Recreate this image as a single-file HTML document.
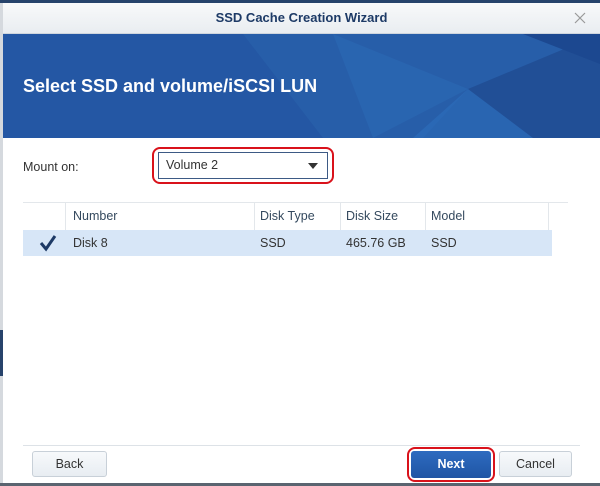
<!DOCTYPE html>
<html><head><style>
body{margin:0;width:600px;height:486px;overflow:hidden;background:#d5d9de;font-family:"Liberation Sans",sans-serif;position:relative}
.win{position:absolute;left:3px;top:3px;width:597px;height:480px;background:#fff;overflow:hidden}
.title{height:30px;background:linear-gradient(#f8f9fa,#e9edf1);text-align:center;line-height:30px;font-weight:bold;font-size:13px;color:#1d3a66;border-bottom:1px solid #cfd6de}
.banner{height:104px;background:#2457a4;position:relative;overflow:hidden}
.banner h1{position:absolute;left:20px;top:42px;margin:0;color:#fff;font-size:18px;font-weight:bold}
.t{position:absolute;font-size:12.5px;color:#333}
</style></head><body>
<div style="position:absolute;left:0;top:0;width:600px;height:3px;background:#27436b"></div>
<div style="position:absolute;left:0;top:330px;width:3px;height:46px;background:#27436b"></div>
<div style="position:absolute;left:0;top:483px;width:600px;height:3px;background:#5a6470"></div>
<div class="win">
<div class="title">SSD Cache Creation Wizard<svg style="position:absolute;right:14px;top:9px" width="12" height="12"><path d="M1 1L11 11M11 1L1 11" stroke="#999" stroke-width="1.2"/></svg></div>
<div class="banner">
<svg width="597" height="104" style="position:absolute;left:0;top:0">
<polygon points="240,0 597,0 597,104 320,104" fill="#275ea9"/>
<polygon points="330,0 465,55 370,104" fill="#2b66b2" opacity=".8"/>
<polygon points="465,55 597,0 597,104 420,104" fill="#214f96"/>
<polygon points="465,55 530,104 410,104" fill="#2c6ab8" opacity=".8"/>
<polygon points="520,0 597,0 597,30" fill="#1c4890"/>
</svg>
<h1>Select SSD and volume/iSCSI LUN</h1>
</div>
<div class="t" style="left:20px;top:157px">Mount on:</div>
<div style="position:absolute;left:149px;top:144px;width:182px;height:37px;border:2px solid #d9121b;border-radius:8px;box-sizing:border-box"></div>
<div style="position:absolute;left:155px;top:149px;width:170px;height:27px;border:1px solid #3d5a85;box-sizing:border-box"></div>
<div class="t" style="left:163px;top:155px">Volume 2</div>
<div style="position:absolute;left:305px;top:160px;border-left:5px solid transparent;border-right:5px solid transparent;border-top:6px solid #333"></div>
<div style="position:absolute;left:20px;top:199px;width:545px;border-top:1px solid #e3e7eb"></div>
<div style="position:absolute;left:62px;top:200px;width:1px;height:27px;background:#e3e7eb"></div>
<div style="position:absolute;left:251px;top:200px;width:1px;height:27px;background:#e3e7eb"></div>
<div style="position:absolute;left:337px;top:200px;width:1px;height:27px;background:#e3e7eb"></div>
<div style="position:absolute;left:422px;top:200px;width:1px;height:27px;background:#e3e7eb"></div>
<div style="position:absolute;left:545px;top:200px;width:1px;height:27px;background:#e3e7eb"></div>
<div class="t" style="left:70px;top:206px;color:#34495e">Number</div>
<div class="t" style="left:257px;top:206px;color:#34495e">Disk Type</div>
<div class="t" style="left:343px;top:206px;color:#34495e">Disk Size</div>
<div class="t" style="left:428px;top:206px;color:#34495e">Model</div>
<div style="position:absolute;left:20px;top:227px;width:529px;height:26px;background:#d7e6f7"></div>
<svg style="position:absolute;left:35px;top:230px" width="20" height="20"><path d="M3 10 L8 16 L17 3" stroke="#1d3a66" stroke-width="3" fill="none"/></svg>
<div class="t" style="left:70px;top:233px">Disk 8</div>
<div class="t" style="left:257px;top:233px">SSD</div>
<div class="t" style="left:343px;top:233px">465.76 GB</div>
<div class="t" style="left:428px;top:233px">SSD</div>
<div style="position:absolute;left:20px;top:442px;width:557px;border-top:1px solid #dde2e7"></div>
<div style="position:absolute;left:29px;top:448px;width:75px;height:26px;border:1px solid #c8d0d8;border-radius:3px;background:linear-gradient(#f7f9fb,#e8edf2);box-sizing:border-box;text-align:center;line-height:24px;font-size:12.5px;color:#333">Back</div>
<div style="position:absolute;left:404px;top:444px;width:88px;height:35px;border:2px solid #d9121b;border-radius:8px;box-sizing:border-box"></div>
<div style="position:absolute;left:408px;top:448px;width:80px;height:27px;border-radius:3px;background:linear-gradient(#2e6bc0,#1f55a5);text-align:center;line-height:27px;font-size:12.5px;color:#fff;font-weight:bold">Next</div>
<div style="position:absolute;left:496px;top:448px;width:73px;height:26px;border:1px solid #c8d0d8;border-radius:3px;background:linear-gradient(#f7f9fb,#e8edf2);box-sizing:border-box;text-align:center;line-height:24px;font-size:12.5px;color:#333">Cancel</div>
</div>
</body></html>
